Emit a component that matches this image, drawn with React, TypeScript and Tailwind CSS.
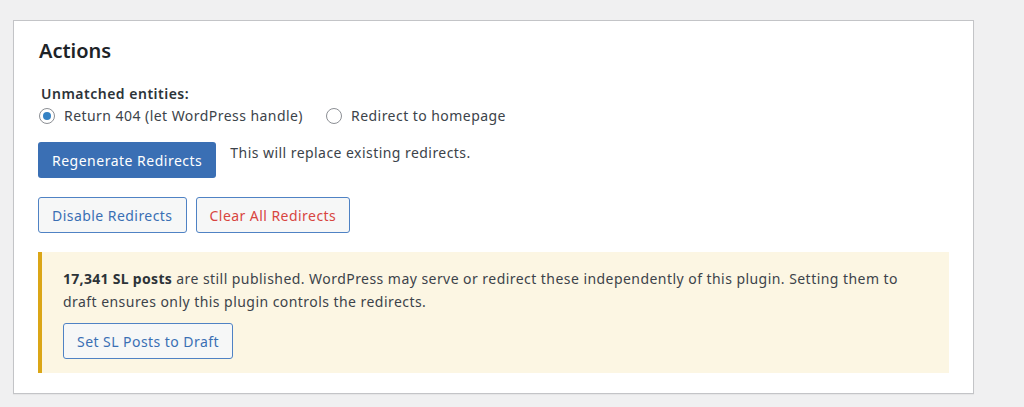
import React from 'react';

const font = { fontFamily: '"Noto Sans", "Open Sans", sans-serif' };

function Radio({ label, checked }: { label: string; checked?: boolean }) {
  return (
    <label className="flex items-center gap-[9px]">
      <span className="w-[16px] h-[16px] rounded-full border border-[#8c8f94] bg-white flex items-center justify-center">
        {checked && <span className="w-[8px] h-[8px] rounded-full bg-[#3582c4]" />}
      </span>
      <span>{label}</span>
    </label>
  );
}

function SecondaryButton({ children, danger }: { children: React.ReactNode; danger?: boolean }) {
  return (
    <button
      className={`h-[36px] px-[13px] rounded-[3px] border border-[#4f82c4] bg-[#f6f7f7] text-[14px] tracking-[0.45px] ${
        danger ? 'text-[#d8453f]' : 'text-[#3a6fb4]'
      }`}
    >
      {children}
    </button>
  );
}

export default function App() {
  return (
    <div className="min-h-[407px] bg-[#f0f0f1] pt-[20px] pl-[13px]" style={font}>
      <div className="w-[961px] bg-white border border-[#c3c4c7] shadow-[0_1px_1px_rgba(0,0,0,0.04)] px-[24px] pt-[16px] pb-[20px] text-[14px] tracking-[0.45px] text-[#3c434a]">
        <h2 className="text-[20px] leading-[28px] font-semibold tracking-normal text-[#1d2327] pl-[1px]">Actions</h2>

        <p className="mt-[19px] leading-[20px] font-semibold text-[#2c3338] pl-[3px] tracking-[0.5px]">Unmatched entities:</p>
        <div className="mt-[2px] h-[20px] flex items-center gap-[23px] pl-[1px] leading-[20px]">
          <Radio label="Return 404 (let WordPress handle)" checked />
          <Radio label="Redirect to homepage" />
        </div>

        <div className="mt-[16px] flex items-start gap-[14px]">
          <button className="h-[36px] px-[14px] rounded-[3px] bg-[#3a6fb4] text-white text-[14px] tracking-[0.5px]">
            Regenerate Redirects
          </button>
          <span className="leading-[22px]">This will replace existing redirects.</span>
        </div>

        <div className="mt-[19px] flex gap-[9px]">
          <SecondaryButton>Disable Redirects</SecondaryButton>
          <SecondaryButton danger>Clear All Redirects</SecondaryButton>
        </div>

        <div className="mt-[19px] bg-[#fcf6e3] border-l-[4px] border-[#dba617] pl-[21px] pr-[30px] pt-[15px] pb-[14px]">
          <p className="leading-[23px]">
            <strong className="font-bold text-[#2c3338] tracking-[0.3px]">17,341 SL posts</strong> are still published. WordPress may serve or
            redirect these independently of this plugin. Setting them to draft ensures only this plugin controls the
            redirects.
          </p>
          <div className="mt-[10px]">
            <SecondaryButton>Set SL Posts to Draft</SecondaryButton>
          </div>
        </div>
      </div>
    </div>
  );
}
